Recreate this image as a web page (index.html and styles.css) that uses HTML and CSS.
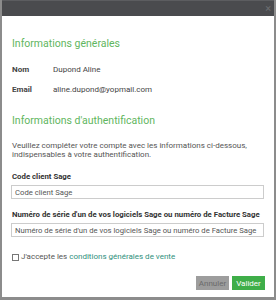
FILE: index.html
```html
<!DOCTYPE html>
<html lang="fr">
<head>
    <meta charset="UTF-8">
    <meta name="viewport" content="width=device-width, initial-scale=1.0">
    <title>Compte Sage</title>
    <link rel="stylesheet" href="styles.css">
</head>
<body>
<div class="modal">
<div class="modal-header">
<span class="close">&times;</span>
</div>
<div class="modal-body">
<h2 class="section-title">Informations générales</h2>
<div class="info-row">
<div class="info-label">Nom</div>
<div class="info-value">Dupond Aline</div>
</div>
<div class="info-row">
<div class="info-label">Email</div>
<div class="info-value">aline.dupond@yopmail.com</div>
</div>
<h2 class="section-title second">Informations d'authentification</h2>
<p class="intro">Veuillez compléter votre compte avec les informations ci-dessous, indispensables à votre authentification.</p>
<label class="field-label" for="code">Code client Sage</label>
<input id="code" class="field" type="text" placeholder="Code client Sage">
<label class="field-label" for="serial">Numéro de série d'un de vos logiciels Sage ou numéro de Facture Sage</label>
<input id="serial" class="field" type="text" placeholder="Numéro de série d'un de vos logiciels Sage ou numéro de Facture Sage">
<div class="terms">
<span class="checkbox"></span>
<span>J'accepte les <a href="#">conditions générales de vente</a></span>
</div>
<div class="actions">
<button class="btn btn-cancel">Annuler</button>
<button class="btn btn-ok">Valider</button>
</div>
</div>
</div>
</body>
</html>
```

FILE: styles.css
```css
body {
    margin: 0;
    padding: 0 2px 3px 2px;
    background-color: #8c8c8c;
    font-family: Roboto, "Liberation Sans", sans-serif;
    color: #444;
}

.modal {
    background-color: white;
    height: 297px;
    box-sizing: border-box;
}

.modal-header {
    height: 16px;
    background-color: #4a4b4e;
    border-top: 1px solid #5c5d60;
    box-sizing: border-box;
    display: flex;
    justify-content: flex-end;
    align-items: center;
    padding-right: 3px;
}

.close {
    color: #6d6e71;
    font-size: 11px;
    line-height: 1;
}

.modal-body {
    padding: 21px 9px 0 10px;
}

.section-title {
    margin: 0 0 15px 0;
    font-size: 10.5px;
    font-weight: 400;
    line-height: 13px;
    color: #5fb660;
}

/* margins collapse with the row above, so this is the full gap */
.section-title.second {
    margin-top: 19px;
    margin-bottom: 14px;
}

.info-row {
    display: flex;
    font-size: 8px;
    line-height: 10px;
    margin-bottom: 10px;
}

.info-label {
    width: 41px;
    font-weight: bold;
    color: #444;
}

.intro {
    margin: 0 0 13px 0;
    font-size: 8px;
    line-height: 9px;
    color: #555;
}

.field-label {
    display: block;
    font-size: 7.8px;
    line-height: 10px;
    font-weight: bold;
    color: #333;
    margin-bottom: 3px;
    white-space: nowrap;
}

.field {
    display: block;
    width: 100%;
    box-sizing: border-box;
    height: 14px;
    border: 1px solid #ccc;
    padding: 0 3px;
    font-family: Roboto, "Liberation Sans", sans-serif;
    font-size: 7.7px;
    color: #555;
    outline: none;
    margin: 0 0 11px -1px;
}

.field::placeholder {
    color: #555;
}

.terms {
    display: flex;
    align-items: center;
    font-size: 8px;
    line-height: 10px;
    color: #555;
    margin-top: 15px;
}

.checkbox {
    width: 7px;
    height: 7px;
    border: 1px solid #777;
    box-sizing: border-box;
    margin-right: 2px;
}

.terms a {
    color: #2f8f7c;
    text-decoration: none;
}

.actions {
    display: flex;
    justify-content: flex-end;
    gap: 3px;
    margin-top: 14px;
}

.btn {
    font-family: Roboto, "Liberation Sans", sans-serif;
    font-size: 8px;
    height: 14px;
    border: none;
    padding: 0;
    cursor: pointer;
}

.btn-cancel {
    background-color: #9d9d9d;
    color: #6a6a6a;
    width: 33px;
}

.btn-ok {
    background-color: #3fae49;
    color: white;
    width: 33px;
}
```
